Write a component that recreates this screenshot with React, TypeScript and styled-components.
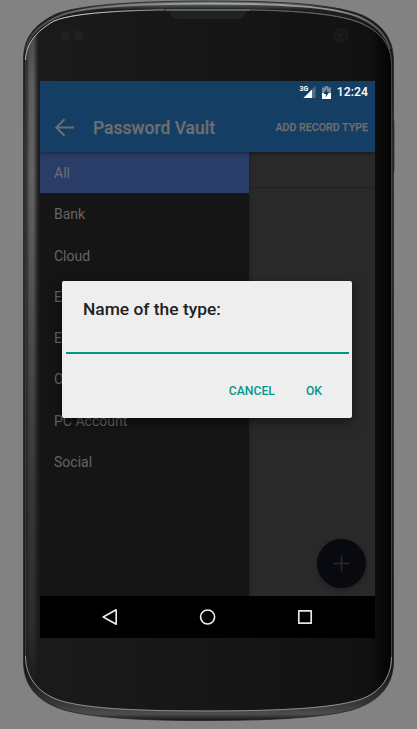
import React from "react";
import styled, { createGlobalStyle } from "styled-components";

const GlobalStyle = createGlobalStyle`
  * { box-sizing: border-box; }
  html, body { margin: 0; padding: 0; background: #828282; }
  body { font-family: Roboto, "Liberation Sans", sans-serif; overflow: hidden; }
`;

const Stage = styled.main`
  position: relative;
  width: 417px;
  height: 729px;
  padding: 81px 42px 91px 40px;
  background: #828282;
  overflow: hidden;
`;

const DeviceArt = styled.svg`
  position: absolute;
  inset: 0;
  pointer-events: none;
`;

const Screen = styled.div`
  position: relative;
  display: flex;
  flex-direction: column;
  width: 335px;
  height: 557px;
  background: #292929;
`;

const Header = styled.header`
  position: relative;
  z-index: 1;
  height: 71px;
  background: #153e65;
  box-shadow: 0 1px 4px rgba(0, 0, 0, 0.45);
  clip-path: inset(0 0 -8px 0);
`;

const StatusBar = styled.div`
  display: flex;
  align-items: center;
  justify-content: flex-end;
  height: 23px;
  padding-right: 7px;
  color: #fff;
`;

const SignalIcon = styled.svg`
  margin-right: 6px;
  overflow: visible;
`;

const BatteryIcon = styled.svg`
  margin-right: 6px;
`;

const Clock = styled.time`
  font-size: 12.3px;
  line-height: 23px;
  font-weight: 500;
`;

const Toolbar = styled.div`
  display: flex;
  align-items: center;
  height: 48px;
  padding: 0 7px 0 14px;
  color: #6e6e6e;
`;

const BackButton = styled.button`
  display: flex;
  width: 39px;
  padding: 0;
  border: 0;
  background: none;
  color: inherit;
`;

const Title = styled.h1`
  flex: 1;
  margin: 0;
  font-size: 17.5px;
  line-height: 24px;
  font-weight: 500;
  white-space: nowrap;
  -webkit-text-stroke: 0.25px currentColor;
`;

const ToolbarAction = styled.button`
  padding: 0;
  border: 0;
  background: none;
  color: inherit;
  font: 500 10.65px/16px Roboto, sans-serif;
  white-space: nowrap;
  -webkit-text-stroke: 0.25px currentColor;
`;

const Content = styled.div`
  display: flex;
  flex: 1;
  min-height: 0;
`;

const Drawer = styled.nav`
  width: 209px;
  background: #151515;
  box-shadow: 1px 0 3px rgba(0, 0, 0, 0.2);
`;

const DrawerItem = styled.div<{ $selected?: boolean }>`
  display: flex;
  align-items: center;
  height: 41.25px;
  padding: 1px 14px 0;
  background: ${({ $selected }) => ($selected ? "#2a3d68" : "transparent")};
  color: ${({ $selected }) => ($selected ? "#6d6d6d" : "#656565")};
  font-size: 14px;
  line-height: 20px;
`;

const Records = styled.section`
  flex: 1;
`;

const RecordHeading = styled.div`
  height: 36px;
  border-bottom: 1px solid #202020;
`;

const Fab = styled.button`
  position: absolute;
  right: 9px;
  bottom: 50.5px;
  display: flex;
  align-items: center;
  justify-content: center;
  width: 49px;
  height: 49px;
  padding: 0;
  border: 0;
  border-radius: 50%;
  background: #090910;
  box-shadow: 0 2px 4px rgba(0, 0, 0, 0.25);
`;

const NavigationBar = styled.footer`
  display: flex;
  align-items: center;
  justify-content: space-between;
  height: 42px;
  padding: 0 61px;
  background: #000;
`;

const Dialog = styled.section`
  position: absolute;
  z-index: 2;
  top: 200px;
  left: 22px;
  width: 290px;
  height: 137px;
  padding: 16px 3px 0 4px;
  border-radius: 2px;
  background: #eee;
  box-shadow: 0 4px 12px rgba(0, 0, 0, 0.5);
`;

const DialogTitle = styled.h2`
  margin: 0 0 0 17px;
  color: #212121;
  font-size: 17.4px;
  line-height: 24px;
  font-weight: 500;
`;

const NameInput = styled.input`
  display: block;
  width: 283px;
  height: 33px;
  padding: 0 3px;
  border: 0;
  border-bottom: 2px solid #009688;
  border-radius: 0;
  outline: 0;
  background: transparent;
`;

const DialogActions = styled.div`
  display: flex;
  justify-content: flex-end;
  gap: 31px;
  padding: 29px 27px 0 0;
`;

const DialogButton = styled.button`
  padding: 0;
  border: 0;
  background: none;
  color: #079687;
  font: 500 12.2px/16px Roboto, sans-serif;
`;

const OUTER =
  "M23.5 60C23.5 38 34 25 55 14.5C80 4 145 1 208 1C280 1 334 4 362 15C384 25 393.5 40 393.5 62V661C393.5 684 381 701 352 710C322 718 268 720.5 208 720.5C140 720.5 94 718 64 710C36 701 23.5 685 23.5 661Z";
const INNER =
  "M25.5 60C26 44 36 31 54 21C76 11.5 140 9.5 208 9.5C275 9.5 336 11.5 363 24C381 33 391.5 45 391.5 64V657C391.5 679 378 696 353 701.5C324 709 268 711 208 711C140 711 92 709 63 701.5C40 695 25.5 679 25.5 656Z";

function Phone() {
  return (
    <DeviceArt width="417" height="729" viewBox="0 0 417 729" aria-hidden="true">
      <defs>
        <linearGradient id="rim" x1="0" y1="0" x2="0" y2="1">
          <stop offset="0" stopColor="#666" />
          <stop offset=".005" stopColor="#555" />
          <stop offset=".012" stopColor="#1d1f20" />
          <stop offset=".05" stopColor="#151515" />
          <stop offset=".2" stopColor="#303030" />
          <stop offset=".93" stopColor="#151515" />
          <stop offset=".975" stopColor="#343536" />
          <stop offset=".991" stopColor="#4c4d4e" />
          <stop offset="1" stopColor="#121212" />
        </linearGradient>
        <linearGradient id="face" x1="25" y1="0" x2="392" y2="0" gradientUnits="userSpaceOnUse">
          <stop offset="0" stopColor="#1b1b1b" />
          <stop offset=".5" stopColor="#161616" />
          <stop offset=".93" stopColor="#121212" />
          <stop offset="1" stopColor="#030303" />
        </linearGradient>
        <linearGradient id="side" x1="25" y1="0" x2="40" y2="0" gradientUnits="userSpaceOnUse">
          <stop offset="0" stopColor="#222" />
          <stop offset=".3" stopColor="#5f5f5f" />
          <stop offset=".55" stopColor="#646464" />
          <stop offset=".85" stopColor="#242424" />
          <stop offset="1" stopColor="#1b1b1b" stopOpacity="0" />
        </linearGradient>
        <linearGradient id="sideFade" x1="0" y1="30" x2="0" y2="690" gradientUnits="userSpaceOnUse">
          <stop offset="0" stopColor="#aaa" />
          <stop offset=".08" stopColor="#eee" />
          <stop offset=".22" stopColor="#fff" />
          <stop offset=".7" stopColor="#666" />
          <stop offset=".9" stopColor="#444" />
          <stop offset="1" stopColor="#000" />
        </linearGradient>
        <linearGradient id="topShine" x1="26" y1="0" x2="392" y2="0" gradientUnits="userSpaceOnUse">
          <stop offset="0" stopColor="#3d3f40" />
          <stop offset=".15" stopColor="#6b6d6e" />
          <stop offset=".5" stopColor="#a3a5a5" />
          <stop offset=".85" stopColor="#929494" />
          <stop offset="1" stopColor="#444" />
        </linearGradient>
        <linearGradient id="innerTop" x1="26" y1="0" x2="392" y2="0" gradientUnits="userSpaceOnUse">
          <stop offset="0" stopColor="#b8b8b8" />
          <stop offset=".12" stopColor="#d1d1d1" />
          <stop offset=".38" stopColor="#85898a" />
          <stop offset=".65" stopColor="#606465" />
          <stop offset=".9" stopColor="#67696a" />
          <stop offset="1" stopColor="#444" />
        </linearGradient>
        <mask id="sideMask"><rect width="417" height="729" fill="url(#sideFade)" /></mask>
        <clipPath id="faceClip"><path d={INNER} /></clipPath>
        <pattern id="mesh" width="4" height="4" patternUnits="userSpaceOnUse">
          <rect width="4" height="4" fill="#252727" />
          <circle cx="1" cy="1" r=".8" fill="#151616" />
          <circle cx="3" cy="3" r=".8" fill="#151616" />
        </pattern>
      </defs>
      <path d="M393 121h1.3v51h-1.3z" fill="#252525" />
      <path d={OUTER} fill="url(#rim)" stroke="#252525" strokeWidth=".8" />
      <path
        d="M26 50C29 33 43 22 63 14.5C86 6.5 145 3.5 208 3.5C276 3.5 332 6 359 17C375 24 386 34 390 49"
        fill="none" stroke="url(#topShine)" strokeWidth="2"
      />
      <path d={INNER} fill="url(#face)" stroke="#464646" strokeWidth=".9" />
      <g clipPath="url(#faceClip)">
        <rect x="25" y="30" width="15" height="660" fill="url(#side)" mask="url(#sideMask)" />
      </g>
      <path
        d="M25.5 60C26 44 36 31 54 21C76 11.5 140 9.5 208 9.5C275 9.5 336 11.5 363 24C381 33 391.5 45 391.5 64"
        fill="none" stroke="url(#innerTop)" strokeWidth="1"
      />
      <path
        d="M25.5 656C25.5 679 40 695 63 701.5C92 709 140 711 208 711C268 711 324 709 353 701.5C378 696 391.5 679 391.5 657"
        fill="none" stroke="#8b8c8c" strokeWidth="1"
      />
      <path d="M163 9H252L248 10L243 17Q242 19 238 19H178Q174 19 172 16L169 11Z" fill="#202222" />
      <path d="M166 10H250" stroke="#5a5f60" strokeWidth="2" />
      <path d="M171 13H244L242 16Q240 18 237 18H179Q175 18 173 16Z" fill="url(#mesh)" />
      <circle cx="65.5" cy="35.5" r="5" fill="#202020" />
      <circle cx="78.5" cy="35.5" r="5" fill="#212121" />
      <circle cx="341" cy="35" r="8" fill="#191919" />
      <circle cx="341" cy="35" r="4" fill="#171719" />
      <circle cx="340.5" cy="35" r="1.5" fill="#202038" />
    </DeviceArt>
  );
}

const categories = ["All", "Bank", "Cloud", "Email", "Ecommerce", "Other", "PC Account", "Social"];

export default function App() {
  return (
    <Stage>
      <GlobalStyle />
      <Phone />
      <Screen>
        <Header>
          <StatusBar>
            <SignalIcon width="16" height="13" viewBox="0 0 16 13">
              <path d="M15.5 0V12H3.5Z" fill="#526e89" />
              <path d="M12 3.5V12H3.5Z" fill="#fff" />
              <text x="-.5" y="5.2" fill="#fff" fontSize="7" fontWeight="700" fontFamily="Roboto">3G</text>
            </SignalIcon>
            <BatteryIcon width="9" height="13" viewBox="0 0 9 13">
              <path d="M2.7 0h3.6v1.4H9V13H0V1.4h2.7Z" fill="#73899c" />
              <path d="M0 7H9V13H0Z" fill="#fff" />
              <path d="M5 2.8 1.5 8H4l-.5 3.5L7.3 6H5Z" fill="#153e65" />
            </BatteryIcon>
            <Clock>12:24</Clock>
          </StatusBar>
          <Toolbar>
            <BackButton aria-label="Back">
              <svg width="21" height="20" viewBox="0 0 21 20" fill="none" stroke="currentColor" strokeWidth="2">
                <path d="M20 9.5H2.5M10.5 1.3 2.3 9.5l8.2 8.2" />
              </svg>
            </BackButton>
            <Title>Password Vault</Title>
            <ToolbarAction>ADD RECORD TYPE</ToolbarAction>
          </Toolbar>
        </Header>
        <Content>
          <Drawer>
            {categories.map((name, index) => (
              <DrawerItem key={name} $selected={index === 0}>{name}</DrawerItem>
            ))}
          </Drawer>
          <Records><RecordHeading /></Records>
        </Content>
        <Fab aria-label="Add record">
          <svg width="17" height="17" viewBox="0 0 17 17" stroke="#29292d" strokeWidth="1.5">
            <path d="M8.5.5v16M.5 8.5h16" />
          </svg>
        </Fab>
        <NavigationBar>
          <svg width="18" height="18" viewBox="0 0 18 18" fill="none" stroke="#eee" strokeWidth="1.6" strokeLinejoin="round">
            <path d="M15.2 1.8V16.2L2.2 9Z" />
          </svg>
          <svg width="18" height="18" viewBox="0 0 18 18" fill="none" stroke="#eee" strokeWidth="1.6">
            <circle cx="8.6" cy="9" r="7" />
          </svg>
          <svg width="18" height="18" viewBox="0 0 18 18" fill="none" stroke="#e6e6e6" strokeWidth="1.7" strokeLinejoin="round">
            <rect x="2.8" y="2.8" width="12.4" height="12.4" />
          </svg>
        </NavigationBar>
        <Dialog role="dialog" aria-label="Name of the type">
          <DialogTitle>Name of the type:</DialogTitle>
          <NameInput aria-label="Type name" />
          <DialogActions>
            <DialogButton>CANCEL</DialogButton>
            <DialogButton>OK</DialogButton>
          </DialogActions>
        </Dialog>
      </Screen>
    </Stage>
  );
}
